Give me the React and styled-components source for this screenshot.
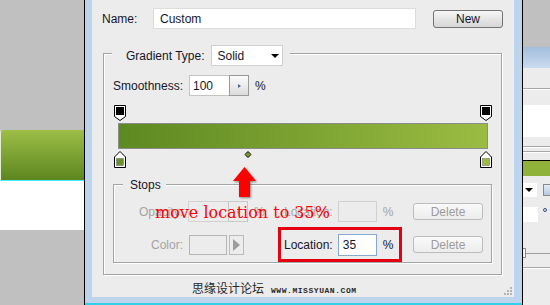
import React from "react";
import styled, { createGlobalStyle } from "styled-components";

const GlobalStyle = createGlobalStyle`
  html, body { margin: 0; padding: 0; background: #c0c0c0; }
  body {
    font-family: "Liberation Sans", "Noto Sans CJK SC", sans-serif;
    font-size: 12px;
    color: #16162a;
  }
`;

const Page = styled.div`
  display: flex;
  width: 550px;
  height: 305px;
  overflow: hidden;
`;

/* ---- left canvas strip ---- */
const LeftPane = styled.div`
  width: 84px;
  flex-shrink: 0;
  display: flex;
  flex-direction: column;
  background: #c0c0c0;
`;

const Swatch = styled.div`
  margin-top: 130px;
  height: 50px;
  background: linear-gradient(#9dbe47, #5c861f);
  border-left: 1px solid #e4ecd6;
  border-top-left-radius: 3px;
  border-bottom: 1px solid #3ff2ff;
`;

const WhiteArea = styled.div`
  height: 49px;
  background: #fff;
`;

const VRule = styled.div`
  width: 1px;
  flex-shrink: 0;
  background: #000;
`;

/* ---- dialog ---- */
const DialogColumn = styled.div`
  width: 437px;
  flex-shrink: 0;
  display: flex;
  flex-direction: column;
`;

const DialogFrame = styled.div`
  flex: 1;
  display: flex;
  background: #ececec;
  border-left: 7px solid #bcd4ec;
  border-right: 8px solid #bcd4ec;
  border-bottom: 6px solid #bcd4ec;
`;

const CyanRule = styled.div`
  height: 2px;
  background: #33cfe9;
`;

const Content = styled.div`
  position: relative;
  flex: 1;
  display: flex;
  flex-direction: column;
`;

const NameRow = styled.div`
  display: flex;
  align-items: center;
  height: 21px;
  margin: 8px 0 0 10px;
`;

const NameLabel = styled.span`
  width: 51px;
`;

const TextField = styled.div`
  width: 263px;
  height: 21px;
  box-sizing: border-box;
  display: flex;
  align-items: center;
  padding-left: 6px;
  background: #fff;
  border: 1px solid #dcdcdc;
`;

const Button = styled.div`
  margin-left: 17px;
  width: 70px;
  height: 18px;
  box-sizing: border-box;
  display: flex;
  align-items: center;
  justify-content: center;
  border: 1px solid #747474;
  border-radius: 3px;
  background: linear-gradient(#f7f7f7, #e6e6e6 50%, #d6d6d6);
`;

const Group = styled.div`
  display: flex;
  flex-direction: column;
  border: 1px solid #a3a3a3;
  box-shadow: inset 1px 1px 0 #fff, 1px 1px 0 #fff;
`;

const OuterGroup = styled(Group)`
  margin: 24px 12px 0 11px;
`;

const StopsGroup = styled(Group)`
  margin: 16px 9px 11px 9px;
`;

const Legend = styled.div`
  align-self: flex-start;
  display: flex;
  align-items: center;
  gap: 6px;
  height: 21px;
  margin: -9px 0 0 8px;
  padding: 0 7px 0 14px;
  background: #ececec;
`;

const StopsLegend = styled.div`
  align-self: flex-start;
  height: 14px;
  line-height: 14px;
  margin: -7px 0 0 9px;
  padding: 0 5px 0 7px;
  background: #ececec;
`;

const Select = styled.div`
  width: 72px;
  height: 21px;
  box-sizing: border-box;
  display: flex;
  align-items: center;
  justify-content: space-between;
  padding: 0 3px 0 6px;
  background: #fff;
  border: 1px solid #d0d0d0;

  &::after {
    content: "";
    border-left: 4px solid transparent;
    border-right: 4px solid transparent;
    border-top: 4px solid #000;
  }
`;

const SmoothRow = styled.div`
  display: flex;
  align-items: center;
  height: 21px;
  margin: 9px 0 0 9px;
`;

const SmoothLabel = styled.span`
  width: 76px;
`;

const FieldCluster = styled.div`
  display: flex;
  align-items: center;
  width: 60px;
`;

const NumberField = styled.div`
  width: 40px;
  height: 21px;
  box-sizing: border-box;
  display: flex;
  align-items: center;
  padding-left: 3px;
  background: ${(p) => (p.$off ? "#ececec" : "#fff")};
  border: 1px solid ${(p) => (p.$off ? "#d2d2d2" : "#c4c4c4")};
  border-right: none;
`;

const Spinner = styled.div`
  width: 20px;
  height: 21px;
  box-sizing: border-box;
  display: flex;
  align-items: center;
  justify-content: center;
  border: 1px solid ${(p) => (p.$off ? "#c8c8c8" : "#9a9a9a")};
  background: ${(p) =>
    p.$off ? "#ececec" : "linear-gradient(#fbfbfb, #dcdcdc)"};

  &::after {
    content: "";
    border-top: 2px solid transparent;
    border-bottom: 2px solid transparent;
    border-left: 3px solid ${(p) => (p.$off ? "#b4b4b4" : "#4a66a0")};
  }
`;

const Pct = styled.span`
  padding-left: 6px;
  color: ${(p) => (p.$off ? "#a4a4a4" : "inherit")};
`;

/* ---- gradient editor ---- */
const Editor = styled.div`
  width: 370px;
  margin: 9px 0 0 14px;
`;

const StopTrack = styled.div`
  position: relative;
  height: ${(p) => p.$h}px;
  margin: 0 2px;
`;

const MarkerSlot = styled.div`
  position: absolute;
  top: 0;
  display: flex;
  transform: translateX(-50%);
`;

const Bar = styled.div`
  height: 26px;
  box-sizing: border-box;
  margin: 3px 0 2px;
  border: 1px solid #8c8c8c;
  background: linear-gradient(90deg, #5d8921, #9bbc42);
`;

/* ---- stops ---- */
const StopsGrid = styled.div`
  display: grid;
  grid-template-columns: 74px 60px 30px 135px 70px;
  grid-template-rows: 21px 35px;
  row-gap: 5px;
  align-items: center;
  margin-top: 9px;
`;

const RowLabel = styled.span`
  padding-right: 5px;
  text-align: right;
  color: #a4a4a4;
`;

const ColorBox = styled.div`
  width: 38px;
  height: 20px;
  margin-left: 1px;
  box-sizing: border-box;
  border: 1px solid #b6b6b6;
  background: #ececec;
`;

const ArrowBtn = styled.div`
  width: 15px;
  height: 20px;
  margin-left: 2px;
  box-sizing: border-box;
  display: flex;
  align-items: center;
  justify-content: center;
  border: 1px solid #bababa;

  &::after {
    content: "";
    border-top: 6px solid transparent;
    border-bottom: 6px solid transparent;
    border-left: 7px solid #9c9c9c;
  }
`;

const LocationGroup = styled.div`
  justify-self: start;
  width: 124px;
  box-sizing: border-box;
  display: flex;
  align-items: center;
  height: ${(p) => (p.$hl ? "35px" : "21px")};
  padding: ${(p) => (p.$hl ? "0 3px" : "0 6px")};
  border: ${(p) => (p.$hl ? "3px solid #e4000f" : "none")};
  color: ${(p) => (p.$hl ? "inherit" : "#a4a4a4")};
`;

const LocField = styled.div`
  width: 39px;
  height: ${(p) => (p.$hl ? "22px" : "21px")};
  margin-left: 5px;
  box-sizing: border-box;
  display: flex;
  align-items: center;
  padding-left: 4px;
  background: ${(p) => (p.$hl ? "#fff" : "#ececec")};
  border: 1px solid ${(p) => (p.$hl ? "#85a8d4" : "#d0d0d0")};
`;

const DeleteBtn = styled.div`
  width: 70px;
  height: 17px;
  box-sizing: border-box;
  display: flex;
  align-items: center;
  justify-content: center;
  border: 1px solid #bcbcbc;
  border-radius: 3px;
  background: linear-gradient(#f9f9f9, #ededed);
  color: #9c9c9c;
`;

/* ---- footer ---- */
const Footer = styled.div`
  flex: 1;
  display: flex;
  align-items: center;
  padding: 2px 2px 0 100px;
`;

const Watermark = styled.div`
  display: flex;
  align-items: baseline;
  gap: 7px;
  color: #2a2a2a;
`;

const SiteName = styled.span`
  font-family: "Noto Sans CJK SC", sans-serif;
  font-size: 12px;
`;

const SiteUrl = styled.span`
  font-family: "Liberation Mono", monospace;
  font-size: 8px;
  font-weight: bold;
  letter-spacing: 0.55px;
`;

const Grip = styled.svg`
  margin-left: auto;
  align-self: flex-end;
  margin-bottom: 1px;
`;

/* ---- annotation ---- */
const Arrow = styled.svg`
  position: absolute;
  left: 141px;
  top: 167px;
  filter: drop-shadow(1px 1px 1px rgba(0, 0, 0, 0.45));
`;

const Note = styled.div`
  position: absolute;
  left: 63px;
  top: 205px;
  font-family: "DejaVu Serif", "Liberation Serif", serif;
  font-size: 16px;
  line-height: 16px;
  white-space: nowrap;
  color: #ff0000;
`;

/* ---- right panel ---- */
const RightPane = styled.div`
  flex: 1;
  display: flex;
  flex-direction: column;
  background: #ececec;
`;

const RpCap = styled.div`
  height: 47px;
  background: #c0c0c0;
`;

const RpTitle = styled.div`
  height: 21px;
  background: linear-gradient(#a3bedc, #c9dbef);
`;

const RpRule = styled.div`
  height: 1px;
  margin-top: ${(p) => p.$gap}px;
  background: #a6a6a6;
  border-bottom: 1px solid #fff;
`;

const RpField = styled.div`
  height: 32px;
  margin-top: 15px;
  background: #fff;
`;

const RpGreen = styled.div`
  height: 15px;
  margin-top: 7px;
  border-top: 1px solid #000;
  background: #8fb23a;
`;

const RpDrop = styled.div`
  display: flex;
  align-items: center;
  height: 14px;
  margin-top: 7px;
`;

const RpDropBox = styled.div`
  width: 12px;
  height: 14px;
  display: flex;
  align-items: center;
  padding-left: 2px;
  background: #fff;

  &::after {
    content: "";
    border-left: 4px solid transparent;
    border-right: 4px solid transparent;
    border-top: 4px solid #000;
  }
`;

const RpIcon = styled.div`
  width: 7px;
  height: 12px;
  margin-left: auto;
  box-sizing: border-box;
  border: 1px solid #8a8a8a;
  border-right: none;
  background: linear-gradient(#e4ecf6, #b6c8e0);
`;

const RpSmall = styled.div`
  display: flex;
  align-items: flex-start;
  height: 15px;
  margin-top: 10px;
`;

const RpSmallBox = styled.div`
  width: 15px;
  height: 15px;
  background: #fff;
`;

const Degree = styled.span`
  margin: 1px 0 0 5px;
  width: 4px;
  height: 4px;
  box-sizing: border-box;
  border: 1px solid #2e4f8a;
  border-radius: 50%;
`;

const RpSlider = styled.div`
  display: flex;
  align-items: center;
  height: 10px;
  margin-top: 26px;

  &::before {
    content: "";
    width: 3px;
    height: 10px;
    box-sizing: border-box;
    border: 1px solid #8a8a8a;
    border-left: none;
    background: #f4f4f4;
  }
  &::after {
    content: "";
    flex: 1;
    height: 1px;
    background: #a0a0a0;
  }
`;

const topStops = [
  { pos: 0, color: "#000" },
  { pos: 100, color: "#000" },
];

const colorStops = [
  { pos: 0, color: "#6a8f29" },
  { pos: 100, color: "#9bbb41" },
];

const TopMarker = ({ color }) => (
  <svg width="12" height="16" viewBox="0 0 12 16">
    <path d="M0.5 0.5H11.5V11.5L6 15.5L0.5 11.5Z" fill="#fff" stroke="#000" />
    <rect x="2" y="2" width="8" height="8" fill={color} />
  </svg>
);

const BottomMarker = ({ color }) => (
  <svg width="12" height="17" viewBox="0 0 12 17">
    <path d="M6 0.5L11.5 6V16.5H0.5V6Z" fill="#fff" stroke="#000" />
    <rect x="2.5" y="7.5" width="7" height="7" fill={color} stroke="#7a7a7a" strokeWidth="0.6" />
  </svg>
);

const Midpoint = () => (
  <svg width="7" height="7" viewBox="0 0 7 7">
    <path d="M3.5 0.5L6.5 3.5L3.5 6.5L0.5 3.5Z" fill="#7d9f32" stroke="#000" />
  </svg>
);

export default function App() {
  return (
    <>
      <GlobalStyle />
      <Page>
        <LeftPane>
          <Swatch />
          <WhiteArea />
        </LeftPane>
        <VRule />

        <DialogColumn>
          <DialogFrame>
            <Content>
              <NameRow>
                <NameLabel>Name:</NameLabel>
                <TextField>Custom</TextField>
                <Button>New</Button>
              </NameRow>

              <OuterGroup>
                <Legend>
                  <span>Gradient Type:</span>
                  <Select>Solid</Select>
                </Legend>

                <SmoothRow>
                  <SmoothLabel>Smoothness:</SmoothLabel>
                  <NumberField>100</NumberField>
                  <Spinner />
                  <Pct>%</Pct>
                </SmoothRow>

                <Editor>
                  <StopTrack $h={15}>
                    {topStops.map((s) => (
                      <MarkerSlot key={s.pos} style={{ left: `${s.pos}%` }}>
                        <TopMarker color={s.color} />
                      </MarkerSlot>
                    ))}
                  </StopTrack>
                  <Bar />
                  <StopTrack $h={17}>
                    {colorStops.map((s) => (
                      <MarkerSlot key={s.pos} style={{ left: `${s.pos}%` }}>
                        <BottomMarker color={s.color} />
                      </MarkerSlot>
                    ))}
                    <MarkerSlot style={{ left: "35%" }}>
                      <Midpoint />
                    </MarkerSlot>
                  </StopTrack>
                </Editor>

                <StopsGroup>
                  <StopsLegend>Stops</StopsLegend>
                  <StopsGrid>
                    <RowLabel>Opacity:</RowLabel>
                    <FieldCluster>
                      <NumberField $off />
                      <Spinner $off />
                    </FieldCluster>
                    <Pct $off>%</Pct>
                    <LocationGroup>
                      <span>Location:</span>
                      <LocField />
                      <Pct>%</Pct>
                    </LocationGroup>
                    <DeleteBtn>Delete</DeleteBtn>

                    <RowLabel>Color:</RowLabel>
                    <FieldCluster>
                      <ColorBox />
                      <ArrowBtn />
                    </FieldCluster>
                    <span />
                    <LocationGroup $hl>
                      <span>Location:</span>
                      <LocField $hl>35</LocField>
                      <Pct>%</Pct>
                    </LocationGroup>
                    <DeleteBtn>Delete</DeleteBtn>
                  </StopsGrid>
                </StopsGroup>
              </OuterGroup>

              <Footer>
                <Watermark>
                  <SiteName>思缘设计论坛</SiteName>
                  <SiteUrl>WWW.MISSYUAN.COM</SiteUrl>
                </Watermark>
                <Grip width="8" height="9" viewBox="0 0 8 9">
                  <g fill="#b4b4b4">
                    <rect x="6" y="0" width="2" height="2" />
                    <rect x="6" y="3" width="2" height="2" />
                    <rect x="3" y="3" width="2" height="2" />
                    <rect x="6" y="6" width="2" height="2" />
                    <rect x="3" y="6" width="2" height="2" />
                    <rect x="0" y="6" width="2" height="2" />
                  </g>
                </Grip>
              </Footer>

              <Arrow width="23" height="31" viewBox="0 0 23 31">
                <path d="M11.5 0L23 14H17V30H6V14H0Z" fill="#ff0000" />
              </Arrow>
              <Note>move location to 35%</Note>
            </Content>
          </DialogFrame>
          <CyanRule />
        </DialogColumn>
        <VRule />

        <RightPane>
          <RpCap />
          <RpTitle />
          <RpRule $gap={20} />
          <RpField />
          <RpRule $gap={9} />
          <RpRule $gap={3} />
          <RpGreen />
          <RpDrop>
            <RpDropBox />
            <RpIcon />
          </RpDrop>
          <RpSmall>
            <RpSmallBox />
            <Degree />
          </RpSmall>
          <RpSlider />
          <RpRule $gap={9} />
        </RightPane>
      </Page>
    </>
  );
}
